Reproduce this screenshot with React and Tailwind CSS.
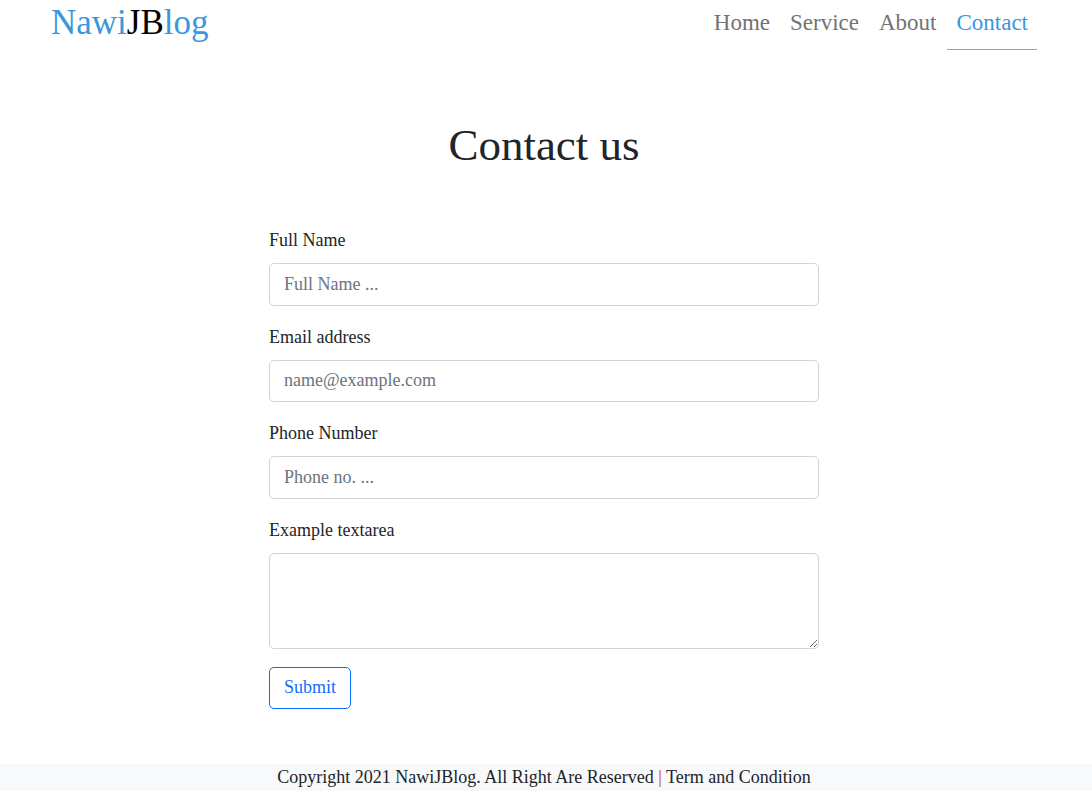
import React from 'react';

const navItems = ['Home', 'Service', 'About', 'Contact'];

const fields = [
  { label: 'Full Name', placeholder: 'Full Name ...', type: 'text' },
  { label: 'Email address', placeholder: 'name@example.com', type: 'email' },
  { label: 'Phone Number', placeholder: 'Phone no. ...', type: 'text' },
];

const Navbar = () => (
  <nav className="flex justify-between items-start h-[50px] pl-[51px] pr-[55px]">
    <a href="#" className="pt-[1px] text-[35px] leading-[44px] text-[#3a97dc]">
      Nawi<span className="text-black">JB</span>log
    </a>
    <ul className="flex gap-[2px]">
      {navItems.map((item) => {
        const active = item === 'Contact';
        return (
          <li key={item}>
            <a
              href="#"
              className={`block px-[9px] h-[50px] pt-[7px] text-[23px] leading-[32px] border-b ${
                active ? 'text-[#3a97dc] border-[#6aaee6]' : 'text-[#737373] border-transparent'
              }`}
            >
              {item}
            </a>
          </li>
        );
      })}
    </ul>
  </nav>
);

const App = () => {
  return (
    <div className="min-h-screen bg-white text-[#212529] font-['Liberation_Serif','Times_New_Roman',serif] text-[18px] leading-[27px]">
      <Navbar />

      <main className="w-[1088px]">
        <h1 className="mt-[68px] text-center text-[45px] leading-[54px]">Contact us</h1>

        <form className="w-[550px] mx-auto mt-[55px]" onSubmit={(e) => e.preventDefault()}>
          {fields.map((f) => (
            <div key={f.label} className="mb-[18px]">
              <label className="block mb-[9px]">{f.label}</label>
              <input
                type={f.type}
                placeholder={f.placeholder}
                className="block w-full h-[42.5px] px-[14px] border border-[#ced4da] rounded-[5px] placeholder:text-[#6c757d] outline-none"
              />
            </div>
          ))}
          <div className="mb-[18px]">
            <label className="block mb-[9px]">Example textarea</label>
            <textarea
              rows={3}
              className="block w-full h-[96px] px-[14px] py-[7px] border border-[#ced4da] rounded-[5px] outline-none"
            />
          </div>
          <button
            type="submit"
            className="h-[42.5px] px-[14px] border border-[#0d6efd] rounded-[5px] text-[#0d6efd] bg-white"
          >
            Submit
          </button>
        </form>
      </main>

      <footer className="mt-[55px] bg-[#f8f9fa] pr-[4px] text-center leading-[27px]">
        Copyright 2021 NawiJBlog. All Right Are Reserved <span className="text-[#c0392b]">|</span> Term and Condition
      </footer>
    </div>
  );
};

export default App;
